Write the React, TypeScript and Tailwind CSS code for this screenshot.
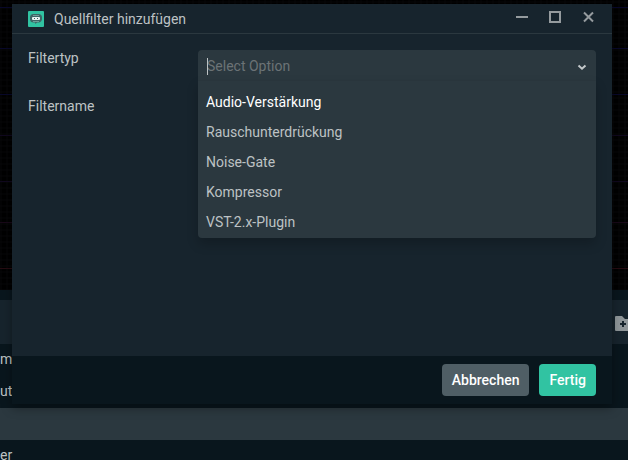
import { useState } from "react";
import clsx from "clsx";

const FILTER_TYPES = [
  "Audio-Verstärkung",
  "Rauschunterdrückung",
  "Noise-Gate",
  "Kompressor",
  "VST-2.x-Plugin",
];

function AppLogo() {
  return (
    <svg className="size-4 shrink-0" viewBox="0 0 16 16" aria-hidden="true">
      <rect width="16" height="16" rx="1" fill="#31c3a2" />
      <path
        d="M5.5 3h5A3.5 3.5 0 0 1 14 6.500v1A3.500 3.500 0 0 1 10.500 11.500H9L7.500 13l-.5-1.500h-1.500A3.500 3.500 0 0 1 2 8V6.500A3.500 3.500 0 0 1 5.500 3z"
        fill="#3f6566"
      />
      <path d="M5 4.500h6" stroke="#6f9c97" />
      <rect x="4" y="6" width="8" height="3" rx="1" fill="#e8f3f1" />
      <rect x="6" y="7" width="1" height="1" fill="#3c6a68" />
      <rect x="9" y="7" width="1" height="1" fill="#3c6a68" />
      <path d="M5 10.500h6" stroke="#6f9c97" />
    </svg>
  );
}

/* Mixer window behind the dialog */
function Backdrop() {
  return (
    <div className="min-h-screen bg-[#09161d] text-sm text-[#bdc2c4]">
      <div className="h-[290px] bg-black">
        <svg className="size-full" aria-hidden="true">
          <defs>
            <pattern id="dots" width="6" height="6" patternUnits="userSpaceOnUse">
              <path d="M1 0v6M0 2h6" stroke="#070709" />
            </pattern>
          </defs>
          <rect width="100%" height="100%" fill="url(#dots)" />
          <path d="M0 7.500h2000M0 48.500h2000M0 94.500h2000" stroke="#08082a" />
          <path d="M0 135.500h2000M0 181.500h2000" stroke="#10081e" />
          <path d="M0 222.500h2000" stroke="#180818" />
          <path d="M0 268.500h2000" stroke="#260c12" />
        </svg>
      </div>
      <div className="h-[10px] bg-[#09161d]" />
      <div className="flex h-11 items-center justify-end overflow-hidden bg-[#17242d]">
        <button type="button" aria-label="Ordner hinzufügen" className="-mr-2">
          <svg width="21" height="16" viewBox="0 0 21 16" className="mt-1 block" aria-hidden="true">
            <path d="M1 0h6l3 3h10v12H1a1 1 0 0 1-1-1V1a1 1 0 0 1 1-1z" fill="#8f9699" />
            <path d="M8 5v6M5 8h6" stroke="#17242d" strokeWidth="2" />
          </svg>
        </button>
      </div>
      <ul>
        <li className="h-8 leading-[30px]">m</li>
        <li className="h-8 leading-[30px]">ut</li>
        <li className="h-8 bg-[#2b383f]" />
        <li className="h-5 leading-[30px]">er</li>
      </ul>
    </div>
  );
}

function TitleBar() {
  return (
    <header className="flex h-[30px] items-center border-b border-[#2b383f] pr-4 pl-4">
      <AppLogo />
      <h1 className="ml-[10px] flex-1 leading-4">Quellfilter hinzufügen</h1>
      <div className="flex gap-[17px] text-[#959b9e]">
        <button type="button" aria-label="Minimieren">
          <svg width="16" height="16" viewBox="0 0 16 16" aria-hidden="true">
            <path d="M2 6h12" stroke="currentColor" strokeWidth="2" />
          </svg>
        </button>
        <button type="button" aria-label="Maximieren">
          <svg width="16" height="16" viewBox="0 0 16 16" aria-hidden="true">
            <path d="M3 1h10v10H3z" fill="none" stroke="currentColor" strokeWidth="2" />
          </svg>
        </button>
        <button type="button" aria-label="Schließen">
          <svg width="16" height="16" viewBox="0 0 16 16" aria-hidden="true">
            <path d="M4 1.500l9 9M13 1.500l-9 9" stroke="currentColor" strokeWidth="2" />
          </svg>
        </button>
      </div>
    </header>
  );
}

function FilterTypeSelect() {
  const [query, setQuery] = useState("");
  const [active, setActive] = useState(0);

  return (
    <div className="relative flex-1">
      <div className="relative flex h-[30px] items-center rounded-t bg-[#2b383f] pr-2">
        <input
          id="filter-type"
          type="text"
          role="combobox"
          aria-expanded="true"
          aria-controls="filter-type-options"
          placeholder="Select Option"
          value={query}
          onChange={(e) => setQuery(e.target.value)}
          className="h-[30px] min-w-0 flex-1 bg-transparent pt-[2px] pl-[9px] outline-none placeholder:text-[#6b7376]"
        />
        {query === "" && <span className="absolute top-2 left-[9px] h-[17px] w-px bg-[#bdc2c4]" />}
        <svg width="12" height="12" viewBox="0 0 12 12" className="mt-1" aria-hidden="true">
          <path d="M2.500 4.500L6 7.700L9.500 4.500" fill="none" stroke="#c4c9cb" strokeWidth="2" />
        </svg>
      </div>
      <ul
        id="filter-type-options"
        role="listbox"
        className="absolute inset-x-0 top-full rounded-b border-t border-[#29353c] bg-[#2b383f] pt-[6px] pb-px shadow-[0_6px_12px_rgba(0,0,0,0.2)]"
      >
        {FILTER_TYPES.map((type, i) => (
          <li
            key={type}
            role="option"
            aria-selected={i === active}
            onMouseEnter={() => setActive(i)}
            className={clsx("h-[30px] px-2 leading-[30px]", i === active && "text-white")}
          >
            {type}
          </li>
        ))}
      </ul>
    </div>
  );
}

export default function App() {
  return (
    <div className="relative h-screen overflow-hidden font-['Roboto','Liberation_Sans',sans-serif]">
      <Backdrop />

      <div
        role="dialog"
        aria-label="Quellfilter hinzufügen"
        className="absolute inset-x-3 top-1 mr-1 flex min-h-[400px] flex-col bg-[#17242d] text-sm text-[#bdc2c4] shadow-[0_4px_10px_rgba(0,0,0,0.35)]"
      >
        <TitleBar />
        <form className="flex flex-1 flex-col" onSubmit={(e) => e.preventDefault()}>
          <div className="flex-1 p-4">
            <div className="flex h-12 items-start">
              <label htmlFor="filter-type" className="w-[170px] leading-4">
                Filtertyp
              </label>
              <FilterTypeSelect />
            </div>
            <div className="flex h-12 items-start">
              <label htmlFor="filter-name" className="w-[170px] leading-4">
                Filtername
              </label>
              <input id="filter-name" type="text" className="h-[30px] flex-1 rounded bg-[#2b383f] px-2" />
            </div>
          </div>
          <footer className="flex h-12 items-center justify-end gap-[10px] bg-[#09161d] px-4 font-medium text-white">
            <button type="button" className="h-8 rounded bg-[#4f5e65] px-[10px]">
              Abbrechen
            </button>
            <button type="submit" className="h-8 rounded bg-[#31c3a2] px-[10px]">
              Fertig
            </button>
          </footer>
        </form>
      </div>
    </div>
  );
}
